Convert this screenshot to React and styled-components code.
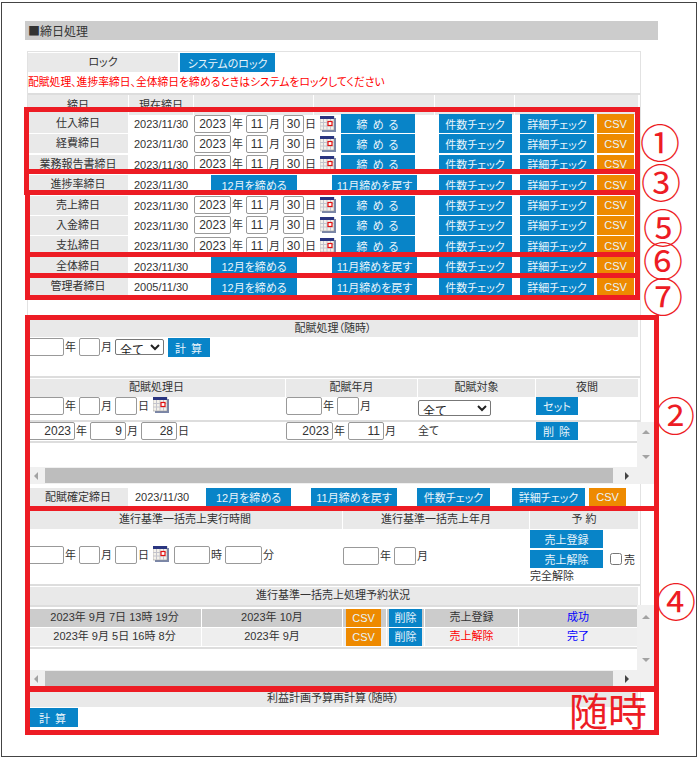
import React from 'react';
import styled, { createGlobalStyle } from 'styled-components';

const Global = createGlobalStyle`
  * { box-sizing: border-box; }
  html, body { margin: 0; background: #fff; }
  body {
    font-family: "Liberation Sans", "Noto Sans CJK JP", sans-serif;
    font-size: 11px;
    color: #333;
    font-feature-settings: "palt";
  }
`;

const Page = styled.div`
  position: relative;
  width: 700px;
  height: 759px;
  overflow: hidden;
`;

const Frame = styled.div`
  margin: 2px 0 0 1px;
  width: 696px;
  height: 755px;
  border: 1px solid #444;
`;

const Title = styled.div`
  margin: 18px 0 0 23px;
  width: 633px;
  height: 19px;
  padding-left: 3px;
  background: #ccc;
  font-family: "Noto Sans CJK JP", sans-serif;
  font-size: 12px;
  font-feature-settings: normal;
  line-height: 19px;
`;

const Panel = styled.div`
  margin: 11px 0 0 25px;
  width: 614px;
  height: 682px;
  border: 1px solid #e2e2e2;
`;

const LockRow = styled.div`
  display: flex;
  gap: 2px;
  margin-top: 1px;
  height: 19px;
`;

const LockLabel = styled.div`
  width: 150px;
  background: #e9e9e9;
  text-align: center;
  line-height: 18px;
`;

const Notice = styled.div`
  height: 23px;
  border-bottom: 2px solid #ddd;
  color: #f00;
  font-size: 10.8px;
  line-height: 20px;
  white-space: nowrap;
`;

const ClosingGrid = styled.div`
  display: grid;
  grid-template-columns: 101px 65px 120px 121px 80px 125px;
  grid-auto-rows: 20.375px;
  align-items: start;
`;

const HeadRow = styled.div`
  display: grid;
  grid-template-columns: ${(p) => p.$cols};
  height: ${(p) => p.$h || 18}px;
  margin-top: ${(p) => p.$top || 0}px;
`;

const HeadCell = styled.div`
  margin-right: ${(p) => p.$gap ?? 1}px;
  background: #e9e9e9;
  text-align: center;
  line-height: ${(p) => p.$lh || 17}px;
  white-space: nowrap;
`;

const BarHead = styled.div`
  width: 610px;
  height: ${(p) => p.$h || 17}px;
  margin-top: ${(p) => p.$top || 0}px;
  background: #e9e9e9;
  text-align: center;
  line-height: 17px;
`;

const RowLabel = styled.div`
  width: 100px;
  height: 19px;
  background: #e9e9e9;
  text-align: center;
  line-height: 18px;
  white-space: nowrap;
`;

const DateText = styled.div`
  padding-left: 5px;
  line-height: 20px;
`;

const DateCell = styled.div`
  grid-column: 3 / 5;
  display: flex;
  align-items: center;
  height: 19px;
`;

const CenterCell = styled.div`
  display: flex;
  justify-content: center;
`;

const ActionCell = styled.div`
  display: flex;
  padding-left: 5px;
  gap: 3px;
`;

const Button = styled.button`
  flex: none;
  width: ${(p) => p.$w}px;
  height: ${(p) => p.$h || 19}px;
  margin-left: ${(p) => p.$ml || 0}px;
  padding: 0;
  border: 0;
  background: ${(p) => (p.$orange ? '#ee8a00' : '#0884c8')};
  color: #e8f4fb;
  font: inherit;
  letter-spacing: ${(p) => p.$ls || 0}px;
  white-space: nowrap;
`;

const Field = styled.input`
  flex: none;
  width: ${(p) => p.$w}px;
  height: 18px;
  margin-left: ${(p) => p.$ml || 0}px;
  padding: 0 ${(p) => (p.$right ? 3 : 2)}px 0 2px;
  border: 1px solid #999;
  border-radius: 2px;
  background: #fff;
  color: #333;
  font: 12px "Liberation Sans", sans-serif;
  text-align: ${(p) => (p.$right ? 'right' : 'center')};
`;

const Unit = styled.span`
  flex: none;
  width: 15px;
  padding-left: 1px;
  line-height: 18px;
`;

const PlainText = styled.span`
  line-height: 18px;
`;

const Choice = styled.select`
  flex: none;
  width: ${(p) => p.$w}px;
  height: 16px;
  margin-top: ${(p) => p.$top || 0}px;
  padding: 0;
  border: 1px solid #777;
  border-radius: 2px;
  background: #fff;
  color: #222;
  font: 12px "Noto Sans CJK JP", sans-serif;
`;

const FormRow = styled.div`
  display: flex;
  align-items: ${(p) => p.$align || 'flex-start'};
  padding-top: ${(p) => p.$pad || 0}px;
`;

const CalcBlock = styled.div`
  height: 41px;
  padding-top: 1px;
  border-bottom: 2px solid #ddd;
`;

const TableRow = styled.div`
  display: grid;
  grid-template-columns: ${(p) => p.$cols};
  height: ${(p) => p.$h}px;
  border-bottom: ${(p) => (p.$line ? '2px solid #ddd' : '0')};
`;

const ScrollArea = styled.div`
  display: grid;
  grid-template-columns: 609px 17px;
  grid-template-rows: ${(p) => p.$main}px 17px;
  width: 626px;
`;

const ScrollMain = styled.div`
  overflow: hidden;
`;

const VBar = styled.div`
  display: flex;
  flex-direction: column;
  justify-content: space-between;
  align-items: center;
  padding: ${(p) => p.$pad || 8}px 0 8px;
  background: #f0f0f0;
`;

const HBar = styled.div`
  display: flex;
  align-items: center;
  background: #f0f0f0;
`;

const Thumb = styled.div`
  width: 568px;
  height: 15px;
  margin: 0 7px;
  background: #bdbdbd;
`;

const Corner = styled.div`
  background: #f0f0f0;
`;

const Arrow = styled.i`
  display: block;
  flex: none;
  width: 0;
  height: 0;
  ${(p) => p.$dir === 'up' && 'border-width: 0 4px 4px; border-style: solid; border-color: transparent transparent #a3a3a3;'}
  ${(p) => p.$dir === 'down' && 'border-width: 4px 4px 0; border-style: solid; border-color: #a3a3a3 transparent transparent;'}
  ${(p) => p.$dir === 'left' && 'margin-left: 6px; border-width: 4px 4px 4px 0; border-style: solid; border-color: transparent #a3a3a3 transparent transparent;'}
  ${(p) => p.$dir === 'right' && 'margin-left: 5px; border-width: 4px 0 4px 4px; border-style: solid; border-color: transparent transparent transparent #444;'}
`;

const ConfirmRow = styled.div`
  display: flex;
  align-items: flex-start;
  height: 18px;
  margin-top: 4px;
`;

const ConfirmDate = styled.div`
  width: 78px;
  padding-left: 7px;
  line-height: 19px;
`;

const ReserveCell = styled.div`
  position: relative;
  padding-top: 1px;
`;

const ReserveCheck = styled.label`
  position: absolute;
  left: 80px;
  top: 22px;
  display: flex;
  align-items: center;
  gap: 2px;
`;

const Check = styled.input`
  width: 12px;
  height: 12px;
  margin: 0;
`;

const ReserveButton = styled(Button)`
  display: block;
  margin-bottom: 2px;
`;

const ReserveNote = styled.div`
  line-height: 13px;
`;

const StatusRow = styled.div`
  display: grid;
  grid-template-columns: 174px 141px 44px 38px 94px 118px;
  height: 18px;
  margin-bottom: 1px;
`;

const StatusCell = styled.div`
  display: flex;
  justify-content: ${(p) => (p.$start ? 'flex-start' : 'center')};
  margin-right: ${(p) => p.$gap ?? 1}px;
  padding-left: ${(p) => p.$pad || 0}px;
  background: ${(p) => (p.$odd ? '#ccc' : '#eee')};
  color: ${(p) => p.$color || '#333'};
  line-height: 17px;
  white-space: nowrap;
`;

const StatusList = styled.div`
  padding-top: 2px;
  border-top: 2px solid #ddd;
  border-bottom: 2px solid #ddd;
`;

const Mark = styled.div`
  position: absolute;
  left: ${(p) => p.$x}px;
  top: ${(p) => p.$y}px;
  width: ${(p) => p.$w}px;
  height: ${(p) => p.$h}px;
  background: #ed1c24;
`;

const Callout = styled.div`
  position: absolute;
  left: ${(p) => p.$x}px;
  top: ${(p) => p.$y}px;
  height: ${(p) => p.$lh}px;
  color: #ed1c24;
  font-family: "Noto Sans CJK JP", sans-serif;
  font-size: ${(p) => p.$size}px;
  line-height: ${(p) => p.$lh}px;
  font-feature-settings: normal;
  white-space: nowrap;
`;

const CalendarIcon = ({ ml = 1 }) => (
  <svg width="16" height="16" viewBox="0 0 16 16" style={{ flex: 'none', marginLeft: ml }}>
    <rect x="2" y="2" width="14" height="14" fill="#7a86a8" />
    <rect x="0" y="0" width="14" height="14" fill="#f4f1ea" stroke="#8a8a8a" strokeWidth="0.5" />
    <rect x="0" y="0" width="14" height="3" fill="#2a3580" />
    <path d="M3.5 3v11M7 3v11M10.5 3v11M0 6.5h14M0 10h14" stroke="#c4c4cc" strokeWidth="1" />
    <rect x="8" y="5.5" width="4" height="4" fill="#fff" stroke="#e01010" strokeWidth="1.2" />
  </svg>
);

const ClosingRow = ({ label, date, kind }) => (
  <>
    <RowLabel>{label}</RowLabel>
    <DateText>{date}</DateText>
    {kind === 'input' ? (
      <DateCell>
        <Field $w={37} defaultValue="2023" />
        <Unit>年</Unit>
        <Field $w={22} defaultValue="11" />
        <Unit>月</Unit>
        <Field $w={21} defaultValue="30" />
        <Unit>日</Unit>
        <CalendarIcon />
        <Button $w={74} $ml={5} $ls={1}>締 め る</Button>
      </DateCell>
    ) : (
      <>
        <CenterCell><Button $w={86}>12月を締める</Button></CenterCell>
        <CenterCell><Button $w={85}>11月締めを戻す</Button></CenterCell>
      </>
    )}
    <CenterCell><Button $w={73}>件数チェック</Button></CenterCell>
    <ActionCell>
      <Button $w={74}>詳細チェック</Button>
      <Button $w={37} $orange>CSV</Button>
    </ActionCell>
  </>
);

const closing = [
  { label: '仕入締日', date: '2023/11/30', kind: 'input' },
  { label: '経費締日', date: '2023/11/30', kind: 'input' },
  { label: '業務報告書締日', date: '2023/11/30', kind: 'input' },
  { label: '進捗率締日', date: '2023/11/30' },
  { label: '売上締日', date: '2023/11/30', kind: 'input' },
  { label: '入金締日', date: '2023/11/30', kind: 'input' },
  { label: '支払締日', date: '2023/11/30', kind: 'input' },
  { label: '全体締日', date: '2023/11/30' },
  { label: '管理者締日', date: '2005/11/30' },
];

const bars = [
  [24, 107, 616, 5], [24, 107, 5, 88], [25, 195, 5, 105], [635, 107, 5, 193],
  [24, 169, 612, 5], [24, 190, 612, 5], [25, 252, 612, 5], [25, 273, 612, 5], [25, 295, 615, 5],
  [25, 315, 634, 5], [25, 315, 5, 420], [654, 315, 5, 420],
  [25, 506, 634, 5], [25, 686, 634, 6], [25, 730, 634, 5],
];

const callouts = [
  ['①', 640, 124], ['③', 641, 164], ['⑤', 643, 209], ['⑥', 643, 242], ['⑦', 643, 278],
  ['②', 655, 397], ['④', 656, 583],
];

const allocCols = '258px 132px 118px 101px';

const ScrollBars = () => (
  <>
    <HBar>
      <Arrow $dir="left" />
      <Thumb />
      <Arrow $dir="right" />
    </HBar>
    <Corner />
  </>
);

export default function App() {
  return (
    <Page>
      <Global />
      <Frame>
        <Title>■締日処理</Title>
        <Panel>
          <LockRow>
            <LockLabel>ロック</LockLabel>
            <Button $w={95}>システムのロック</Button>
          </LockRow>
          <Notice>配賦処理、進捗率締日、全体締日を締めるときはシステムをロックしてください</Notice>
          <HeadRow $cols="101px 65px 120px 121px 80px 123px" $h={19}>
            <HeadCell $lh={20}>締日</HeadCell>
            <HeadCell $lh={20}>現在締日</HeadCell>
            <HeadCell />
            <HeadCell />
            <HeadCell />
            <HeadCell $gap={0} />
          </HeadRow>
          <ClosingGrid>
            {closing.map((row) => <ClosingRow key={row.label} {...row} />)}
          </ClosingGrid>

          <BarHead $top={23}>配賦処理（随時）</BarHead>
          <CalcBlock>
            <FormRow>
              <Field $w={36} />
              <Unit>年</Unit>
              <Field $w={21} />
              <Unit>月</Unit>
              <Choice $w={49} $top={1}><option>全て</option></Choice>
              <Button $w={42} $ml={4} $ls={1}>計 算</Button>
            </FormRow>
          </CalcBlock>
          <HeadRow $cols="258px 132px 118px 104px" $top={1}>
            <HeadCell>配賦処理日</HeadCell>
            <HeadCell>配賦年月</HeadCell>
            <HeadCell>配賦対象</HeadCell>
            <HeadCell $gap={2}>夜間</HeadCell>
          </HeadRow>
          <TableRow $cols={allocCols} $h={25} $line>
            <FormRow>
              <Field $w={36} />
              <Unit>年</Unit>
              <Field $w={21} />
              <Unit>月</Unit>
              <Field $w={22} />
              <Unit>日</Unit>
              <CalendarIcon />
            </FormRow>
            <FormRow>
              <Field $w={36} />
              <Unit>年</Unit>
              <Field $w={22} />
              <Unit>月</Unit>
            </FormRow>
            <FormRow $pad={3}>
              <Choice $w={73}><option>全て</option></Choice>
            </FormRow>
            <FormRow>
              <Button $w={42} $h={18}>セット</Button>
            </FormRow>
          </TableRow>
          <ScrollArea $main={45}>
            <ScrollMain>
              <TableRow $cols={allocCols} $h={21} $line>
                <FormRow>
                  <Field $w={47} $right defaultValue="2023" />
                  <Unit>年</Unit>
                  <Field $w={36} $right defaultValue="9" />
                  <Unit>月</Unit>
                  <Field $w={36} $right defaultValue="28" />
                  <Unit>日</Unit>
                </FormRow>
                <FormRow>
                  <Field $w={47} $right defaultValue="2023" />
                  <Unit>年</Unit>
                  <Field $w={36} $right defaultValue="11" />
                  <Unit>月</Unit>
                </FormRow>
                <FormRow><PlainText>全て</PlainText></FormRow>
                <FormRow>
                  <Button $w={42} $h={18} $ls={1}>削 除</Button>
                </FormRow>
              </TableRow>
            </ScrollMain>
            <VBar>
              <Arrow $dir="up" />
              <Arrow $dir="down" />
            </VBar>
            <ScrollBars />
          </ScrollArea>
          <ConfirmRow>
            <RowLabel>配賦確定締日</RowLabel>
            <ConfirmDate>2023/11/30</ConfirmDate>
            <Button $w={85} $h={18}>12月を締める</Button>
            <Button $w={86} $h={18} $ml={20}>11月締めを戻す</Button>
            <Button $w={73} $h={18} $ml={20}>件数チェック</Button>
            <Button $w={73} $h={18} $ml={22}>詳細チェック</Button>
            <Button $w={37} $h={18} $ml={4} $orange>CSV</Button>
          </ConfirmRow>

          <HeadRow $cols="315px 187px 108px" $top={5}>
            <HeadCell>進行基準一括売上実行時間</HeadCell>
            <HeadCell>進行基準一括売上年月</HeadCell>
            <HeadCell $gap={0}>予 約</HeadCell>
          </HeadRow>
          <TableRow $cols="315px 187px 110px" $h={57} $line>
            <FormRow $pad={17}>
              <Field $w={36} />
              <Unit>年</Unit>
              <Field $w={21} />
              <Unit>月</Unit>
              <Field $w={22} />
              <Unit>日</Unit>
              <CalendarIcon />
              <Field $w={36} $ml={5} />
              <Unit>時</Unit>
              <Field $w={37} />
              <Unit>分</Unit>
            </FormRow>
            <FormRow $pad={18}>
              <Field $w={36} />
              <Unit>年</Unit>
              <Field $w={22} />
              <Unit>月</Unit>
            </FormRow>
            <ReserveCell>
              <ReserveButton $w={73} $h={18}>売上登録</ReserveButton>
              <ReserveButton $w={73} $h={18}>売上解除</ReserveButton>
              <ReserveCheck><Check type="checkbox" />売</ReserveCheck>
              <ReserveNote>完全解除</ReserveNote>
            </ReserveCell>
          </TableRow>
          <BarHead $top={1} $h={18}>進行基準一括売上処理予約状況</BarHead>
          <ScrollArea $main={65}>
            <ScrollMain>
              <StatusList>
                <StatusRow>
                  <StatusCell $odd>2023年 9月 7日 13時 19分</StatusCell>
                  <StatusCell $odd>2023年 10月</StatusCell>
                  <StatusCell $odd $start $pad={3}><Button $w={35} $h={18} $orange>CSV</Button></StatusCell>
                  <StatusCell $odd $start $pad={2}><Button $w={33} $h={18}>削除</Button></StatusCell>
                  <StatusCell $odd>売上登録</StatusCell>
                  <StatusCell $odd $color="#00f" $gap={0}>成功</StatusCell>
                </StatusRow>
                <StatusRow>
                  <StatusCell>2023年 9月 5日 16時 8分</StatusCell>
                  <StatusCell>2023年 9月</StatusCell>
                  <StatusCell $start $pad={3}><Button $w={35} $h={18} $orange>CSV</Button></StatusCell>
                  <StatusCell $start $pad={2}><Button $w={33} $h={18}>削除</Button></StatusCell>
                  <StatusCell $color="#f00">売上解除</StatusCell>
                  <StatusCell $color="#00f" $gap={0}>完了</StatusCell>
                </StatusRow>
              </StatusList>
            </ScrollMain>
            <VBar $pad={10}>
              <Arrow $dir="up" />
              <Arrow $dir="down" />
            </VBar>
            <ScrollBars />
          </ScrollArea>
          <BarHead $top={3}>利益計画予算再計算（随時）</BarHead>
          <FormRow $pad={1}>
            <Button $w={50} $ls={1}>計 算</Button>
          </FormRow>
        </Panel>
      </Frame>

      {bars.map(([x, y, w, h]) => (
        <Mark key={`${x}-${y}-${w}`} $x={x} $y={y} $w={w} $h={h} />
      ))}
      {callouts.map(([text, x, y]) => (
        <Callout key={text} $x={x} $y={y} $size={40} $lh={34}>{text}</Callout>
      ))}
      <Callout $x={569} $y={690} $size={39} $lh={39}>随時</Callout>
    </Page>
  );
}
